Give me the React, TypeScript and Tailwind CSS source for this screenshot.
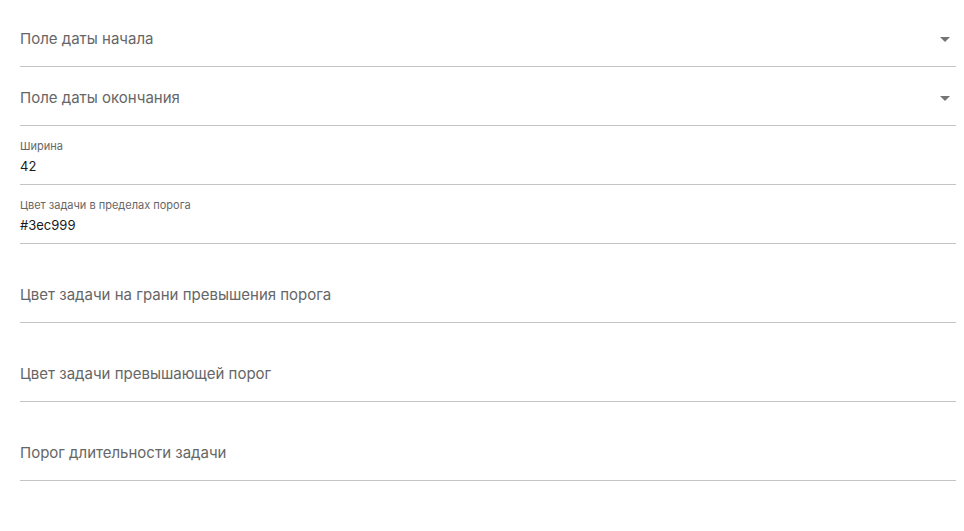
import React from 'react';

// Settings form: task bar fields, width and colour thresholds.
type Field = {
  label: string;
  value?: string;
  select?: boolean;
  spaced?: boolean;
};

const fields: Field[] = [
  { label: 'Поле даты начала', select: true },
  { label: 'Поле даты окончания', select: true },
  { label: 'Ширина', value: '42' },
  { label: 'Цвет задачи в пределах порога', value: '#3ec999' },
  { label: 'Цвет задачи на грани превышения порога', spaced: true },
  { label: 'Цвет задачи превышающей порог', spaced: true },
  { label: 'Порог длительности задачи', spaced: true },
];

function CaretDown() {
  return (
    <svg width="24" height="24" viewBox="0 0 24 24" className="text-[#757575]">
      <path d="M7 10l5 5 5-5z" fill="currentColor" />
    </svg>
  );
}

function FormField({ f }: { f: Field }) {
  if (f.value !== undefined) {
    return (
      <div className="flex h-[59px] flex-col border-b border-[#c4c4c4] pt-[14px]">
        <span className="text-[11px] leading-[13px] text-[#666]">{f.label}</span>
        <span className="mt-[4px] text-[13px] leading-[18px] text-[#1a1a1a]">{f.value}</span>
      </div>
    );
  }
  return (
    <div
      className={`flex items-center justify-between border-b border-[#c4c4c4] ${
        f.spaced ? 'h-[79px] pt-[24px]' : 'h-[59px] pt-[6px] pb-[2px]'
      }`}
    >
      <span className="text-[15px] leading-[20px] text-[#666]">{f.label}</span>
      {f.select && (
        <span className="-mr-[1px] flex">
          <CaretDown />
        </span>
      )}
    </div>
  );
}

export default function App() {
  return (
    <div
      className="min-h-[531px] bg-white pt-[8px] pl-[20px] pr-[8px]"
      style={{ fontFamily: 'Inter, "Noto Sans", sans-serif' }}
    >
      {fields.map((f) => (
        <FormField key={f.label} f={f} />
      ))}
    </div>
  );
}
